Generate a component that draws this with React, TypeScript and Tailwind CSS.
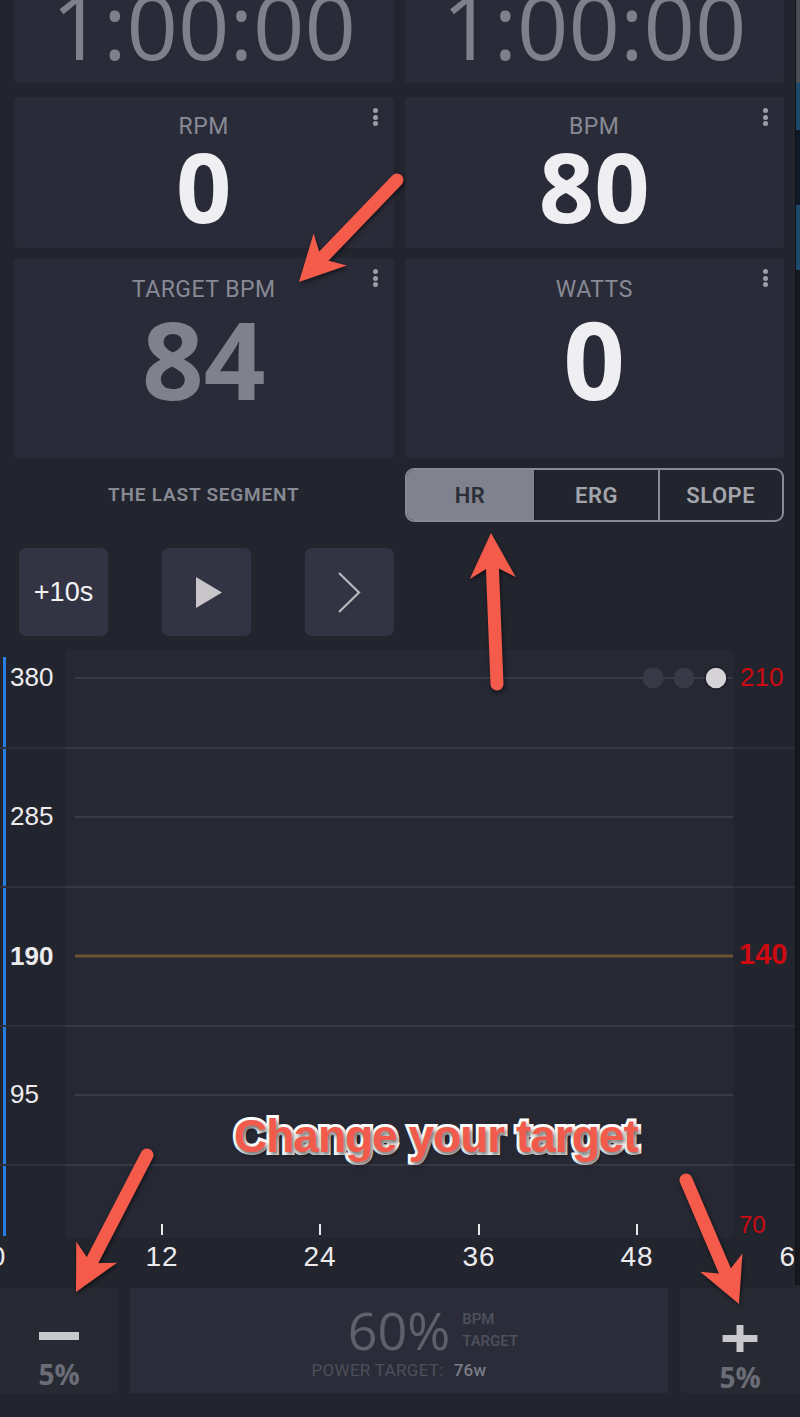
import React from 'react'

const label = "font-['Roboto',sans-serif] text-[23px] leading-[24px] tracking-[0.5px] text-[#878a94]"

function Dots() {
    return (
        <div className="absolute right-[16px] top-[11px] flex flex-col gap-[1.5px]">
            <span className="w-[5px] h-[5px] rounded-full bg-[#9c9ea6]" />
            <span className="w-[5px] h-[5px] rounded-full bg-[#9c9ea6]" />
            <span className="w-[5px] h-[5px] rounded-full bg-[#9c9ea6]" />
        </div>
    )
}

function TimeCard() {
    return (
        <div className="h-[83px] rounded-b-[4px] bg-[#2a2b38] overflow-hidden flex justify-center">
            <span className="font-['Open_Sans',sans-serif] font-normal text-[90px] leading-[90px] mt-[-20px] text-[#7e818b]">1:00:00</span>
        </div>
    )
}

function SmallCard({ title, value }: { title: string; value: string }) {
    return (
        <div className="relative h-[151px] rounded-[4px] bg-[#2a2b38] flex flex-col items-center pt-[18px]">
            <Dots />
            <div className={label}>{title}</div>
            <div className="font-['Open_Sans',sans-serif] font-bold text-[97px] leading-[78px] mt-[7px] text-[#efeef1]">{value}</div>
        </div>
    )
}

function TallCard({ title, value, dim }: { title: string; value: string; dim?: boolean }) {
    return (
        <div className="relative h-[200px] rounded-[4px] bg-[#2a2b38] flex flex-col items-center pt-[20px]">
            <Dots />
            <div className={label}>{title}</div>
            <div className={`font-['Open_Sans',sans-serif] font-bold text-[108px] leading-[86px] mt-[14px] ${dim ? 'text-[#7f828c]' : 'text-[#efeef1]'}`}>{value}</div>
        </div>
    )
}

function Chart() {
    const majors = [28, 167, 445]
    const minors = [98, 237, 376, 515]
    const ticks = [162, 320, 479, 637]
    const axis = "Liberation Sans, Arial, sans-serif"
    return (
        <svg width="800" height="638" viewBox="0 0 800 638" className="block">
            <rect x="66" y="0" width="667" height="588" fill="#262833" />
            <rect x="3" y="7" width="3" height="579" fill="#2a7de1" />
            {minors.map((y) => (
                <g key={y}>
                    <rect x="0" y={y - 1} width="800" height="2" fill="#2e2f3a" />
                    <rect x="66" y={y - 1} width="667" height="2" fill="#383945" />
                </g>
            ))}
            {majors.map((y) => (
                <rect key={y} x="75" y={y - 1} width="658" height="2" fill="#3a3b47" />
            ))}
            <rect x="75" y="304.5" width="658" height="3" fill="#6d5230" />

            <circle cx="653" cy="28" r="10.5" fill="#383a47" />
            <circle cx="684" cy="28" r="10.5" fill="#383a47" />
            <circle cx="716" cy="28" r="11" fill="#d5d3d6" stroke="#1c1d24" strokeWidth="1.5" />

            <g fontFamily={axis} fill="#ecebee" fontSize="26">
                <text x="10" y="36">380</text>
                <text x="10" y="175">285</text>
                <text x="10" y="315" fontWeight="700">190</text>
                <text x="10" y="453">95</text>
            </g>
            <g fontFamily={axis} fill="#cc0a12">
                <text x="740" y="36" fontSize="26">210</text>
                <text x="739" y="314" fontSize="29" fontWeight="700">140</text>
                <text x="739" y="583" fontSize="24">70</text>
            </g>

            {ticks.map((x) => (
                <rect key={x} x={x - 1} y="574" width="2" height="11" fill="#e8e7ea" />
            ))}
            <g fontFamily={axis} fill="#ecebee" fontSize="28" textAnchor="middle" letterSpacing="1">
                <text x="-2" y="616">0</text>
                {ticks.map((x, i) => (
                    <text key={x} x={x} y="616">{(i + 1) * 12}</text>
                ))}
                <text x="796" y="616">60</text>
            </g>
        </svg>
    )
}

function Arrow({ x1, y1, x2, y2 }: { x1: number; y1: number; x2: number; y2: number }) {
    const len = Math.hypot(x2 - x1, y2 - y1)
    const ux = (x2 - x1) / len
    const uy = (y2 - y1) / len
    const nx = -uy
    const ny = ux
    const L = 45
    const W = 23
    const bx = x2 - ux * L
    const by = y2 - uy * L
    const pts = [
        [x2, y2],
        [bx + nx * W, by + ny * W],
        [x2 - ux * L * 0.72, y2 - uy * L * 0.72],
        [bx - nx * W, by - ny * W],
    ].map((p) => p.join(',')).join(' ')
    return (
        <g>
            <line x1={x1} y1={y1} x2={x2 - ux * L * 0.6} y2={y2 - uy * L * 0.6} stroke="#f55b4b" strokeWidth="13" strokeLinecap="round" />
            <polygon points={pts} fill="#f55b4b" />
        </g>
    )
}

export default function App() {
    return (
        <div className="relative w-[800px] h-[1417px] overflow-hidden bg-[#23252e] font-['Roboto',sans-serif]">
            {/* stat cards */}
            <div className="grid grid-cols-2 gap-x-[11px] pl-[14px] pr-[16px]">
                <TimeCard />
                <TimeCard />
            </div>
            <div className="grid grid-cols-2 gap-x-[11px] pl-[14px] pr-[16px] mt-[14px]">
                <SmallCard title="RPM" value="0" />
                <SmallCard title="BPM" value="80" />
            </div>
            <div className="grid grid-cols-2 gap-x-[11px] pl-[14px] pr-[16px] mt-[10px]">
                <TallCard title="TARGET BPM" value="84" dim />
                <TallCard title="WATTS" value="0" />
            </div>

            {/* segment + mode */}
            <div className="grid grid-cols-2 gap-x-[11px] pl-[14px] pr-[16px] mt-[10px] h-[54px]">
                <div className="flex items-center justify-center text-[19px] font-semibold tracking-[0.8px] text-[#878a94]">THE LAST SEGMENT</div>
                <div className="flex border-2 border-[#878a94] rounded-[9px] overflow-hidden text-[22px] font-semibold tracking-[0.5px]">
                    <div className="w-[127px] bg-[#80838d] text-[#2b2d39] flex items-center justify-center">HR</div>
                    <div className="w-[124px] border-l-2 border-[#1e1f27] text-[#a3a5ad] flex items-center justify-center">ERG</div>
                    <div className="flex-1 border-l-2 border-[#878a94] text-[#a3a5ad] flex items-center justify-center">SLOPE</div>
                </div>
            </div>

            {/* controls */}
            <div className="flex gap-[54px] pl-[19px] mt-[26px]">
                <button className="w-[89px] h-[88px] rounded-[7px] bg-[#333443] text-[27px] text-[#f2f1f4] font-['Liberation_Sans',sans-serif]">+10s</button>
                <button className="w-[89px] h-[88px] rounded-[7px] bg-[#333443] flex items-center justify-center">
                    <svg width="26" height="31" viewBox="0 0 26 31" className="ml-[4px]"><polygon points="0,0 26,15.5 0,31" fill="#c9c6c9" /></svg>
                </button>
                <button className="w-[89px] h-[88px] rounded-[7px] bg-[#333443] flex items-center justify-center">
                    <svg width="25" height="41" viewBox="0 0 25 41"><polyline points="2,1 22,20.5 2,40" fill="none" stroke="#b9b8bd" strokeWidth="2.2" /></svg>
                </button>
            </div>

            {/* chart */}
            <div className="mt-[14px] h-[638px]">
                <Chart />
            </div>

            {/* target adjust */}
            <div className="flex h-[105px]">
                <button className="w-[118px] bg-[#282a33] rounded-r-[4px] flex flex-col items-center pt-[44px]">
                    <span className="w-[40px] h-[8px] bg-[#c9c9cd]" />
                    <span className="mt-[18px] font-['Open_Sans',sans-serif] font-bold text-[28px] leading-[32px] text-[#6a6c76]">5%</span>
                </button>
                <div className="ml-[12px] w-[538px] bg-[#2b2c39] flex flex-col items-center pt-[17px]">
                    <div className="grid grid-cols-[1fr_auto_1fr] items-center w-full">
                        <span />
                        <span className="font-['Open_Sans',sans-serif] text-[52px] leading-[50px] text-[#5e606a]">60%</span>
                        <div className="flex flex-col pl-[12px] text-[15px] leading-[22px] font-medium text-[#4f515c]">
                            <span>BPM</span>
                            <span>TARGET</span>
                        </div>
                    </div>
                    <div className="flex items-center gap-[10px] mt-[5px] text-[17px] leading-[20px] tracking-[0.3px]">
                        <span className="text-[#4d4f5a]">POWER TARGET:</span>
                        <span className="font-medium text-[#7b7d87]">76w</span>
                    </div>
                </div>
                <button className="ml-[12px] flex-1 bg-[#282a33] rounded-l-[4px] flex flex-col items-center pt-[37px]">
                    <svg width="40" height="31" viewBox="0 0 40 31"><rect x="0" y="11.5" width="40" height="8" fill="#c9c9cd" /><rect x="16" y="0" width="8" height="31" fill="#c9c9cd" /></svg>
                    <span className="mt-[9px] font-['Open_Sans',sans-serif] font-bold text-[28px] leading-[32px] text-[#6a6c76]">5%</span>
                </button>
            </div>

            {/* edge of the neighbouring window */}
            <div className="absolute right-0 top-0 w-[5px] h-[1285px] flex flex-col border-l border-[#111216]">
                <div className="h-[83px] bg-[#4a4c54]" />
                <div className="h-[47px] bg-[#1d4a6c]" />
                <div className="h-[75px] bg-[#0f1a26]" />
                <div className="h-[65px] bg-[#1d4a6c]" />
                <div className="flex-1 bg-[#17181d]" />
            </div>

            {/* annotations */}
            <svg width="800" height="1417" className="absolute left-0 top-0 pointer-events-none [filter:drop-shadow(1px_2px_2px_rgba(0,0,0,0.55))]">
                <Arrow x1={397} y1={180} x2={299} y2={282} />
                <Arrow x1={497} y1={684} x2={491} y2={533} />
                <Arrow x1={147} y1={1155} x2={76} y2={1292} />
                <Arrow x1={686} y1={1180} x2={739} y2={1304} />
            </svg>
            <div className="absolute left-[234px] top-[1113px] font-['Liberation_Sans',Arial,sans-serif] font-bold text-[46px] leading-[46px] tracking-[-1px] text-[#f25a4b] [-webkit-text-stroke:6px_white] [paint-order:stroke_fill] [text-shadow:2px_3px_4px_rgba(0,0,0,0.6)] whitespace-nowrap">
                Change your target
            </div>
        </div>
    )
}
